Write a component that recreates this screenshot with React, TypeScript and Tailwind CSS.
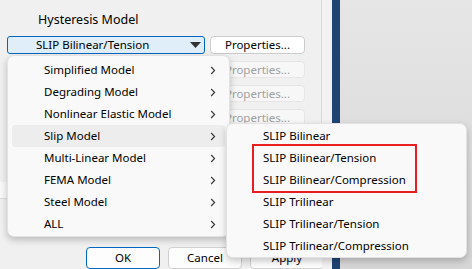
import React from "react";

const Chevron = () => (
  <svg width="6" height="9" viewBox="0 0 6 9" className="shrink-0">
    <path d="M1.2 1 L4.6 4.5 L1.2 8" fill="none" stroke="#333" strokeWidth="1.1" />
  </svg>
);

const mainItems = [
  "Simplified Model",
  "Degrading Model",
  "Nonlinear Elastic Model",
  "Slip Model",
  "Multi-Linear Model",
  "FEMA Model",
  "Steel Model",
  "ALL",
];

const subItems = [
  "SLIP Bilinear",
  "SLIP Bilinear/Tension",
  "SLIP Bilinear/Compression",
  "SLIP Trilinear",
  "SLIP Trilinear/Tension",
  "SLIP Trilinear/Compression",
];

export default function App() {
  return (
    <div
      className="relative w-[472px] h-[269px] overflow-hidden flex text-[11.5px] text-black"
      style={{ fontFamily: '"Noto Sans", "Liberation Sans", sans-serif' }}
    >
      {/* dialog panel */}
      <div className="w-[322px] shrink-0 bg-[#f0f0f0] border-r border-[#dadada] flex flex-col">
        <div className="pt-[11px] pl-[38px] h-[37px] leading-[17px] text-[12.5px]">Hysteresis Model</div>
        <div className="flex items-start gap-[5px] pl-[7px] h-[18px]">
          <div className="w-[198px] h-[18px] rounded-[3px] border border-[#0067c0] bg-[#e0eef9] flex items-center pl-[28px] pr-[2px] leading-[16px]">
            <span className="flex-1">SLIP Bilinear/Tension</span>
            <svg width="11" height="6" viewBox="0 0 11 6" className="mr-[1px]">
              <path d="M0 0 H11 L5.5 6 Z" fill="#333" />
            </svg>
          </div>
          <div className="w-[95px] h-[18px] rounded-[4px] border border-[#cccccc] bg-white flex items-center justify-center leading-[16px]">
            Properties...
          </div>
        </div>
        <div className="flex flex-col gap-[7px] pl-[210px] pt-[7px]">
          {[0, 1, 2, 3].map((i) => (
            <div
              key={i}
              className="w-[95px] h-[17px] rounded-[4px] border border-[#e6e6e6] bg-[#f7f7f7] flex items-center justify-center leading-[15px] text-[#a0a0a0]"
            >
              Properties...
            </div>
          ))}
        </div>
        <div className="mt-[32px] h-[18px] w-[220px] bg-[#f9f9f9] border-b border-[#dcdcdc]" />
        <div className="flex gap-[8px] pl-[86px] mt-[48px]">
          <div className="w-[74px] h-[22px] shrink-0 rounded-[4px] border border-[#0067c0] bg-[#fdfdfd] flex items-center justify-center leading-[16px]">
            OK
          </div>
          <div className="w-[74px] h-[22px] shrink-0 rounded-[4px] border border-[#d0d0d0] bg-[#fdfdfd] flex items-center justify-center leading-[16px]">
            Cancel
          </div>
          <div className="w-[74px] h-[22px] shrink-0 rounded-[4px] border border-[#d0d0d0] bg-[#fdfdfd] flex items-center justify-center leading-[16px]">
            Apply
          </div>
        </div>
      </div>
      <div className="w-[10px] shrink-0 bg-[#f2f2f2]" />
      <div className="w-[8px] shrink-0 bg-[#1f4474]" />
      <div className="flex-1 bg-gradient-to-b from-[#e6e6e6] to-[#d6d6d6]" />

      {/* main dropdown menu */}
      <div className="absolute left-[7px] top-[55px] w-[223px] h-[182px] rounded-[7px] bg-[#f9f9f9] border border-[#e2e2e2] shadow-[0_3px_7px_rgba(0,0,0,0.22)] pt-[3px]">
        {mainItems.map((t, i) => (
          <div
            key={t}
            className={`mx-[4px] h-[22px] rounded-[4px] flex items-center pl-[32px] pr-[9px] ${
              i === 3 ? "bg-[#ededed]" : ""
            }`}
          >
            <span className="flex-1 leading-[16px]">{t}</span>
            <Chevron />
          </div>
        ))}
      </div>

      {/* submenu */}
      <div className="absolute left-[226px] top-[123px] w-[241px] h-[135px] rounded-[7px] bg-[#f9f9f9] border border-[#e2e2e2] shadow-[0_3px_7px_rgba(0,0,0,0.22)] pt-[1px]">
        {subItems.map((t) => (
          <div key={t} className="h-[22px] flex items-center pl-[36px] leading-[16px]">
            {t}
          </div>
        ))}
      </div>

      {/* red highlight box */}
      <div className="absolute left-[252px] top-[144px] w-[165px] h-[49px] border-2 border-[#ea1c24]" />
    </div>
  );
}
